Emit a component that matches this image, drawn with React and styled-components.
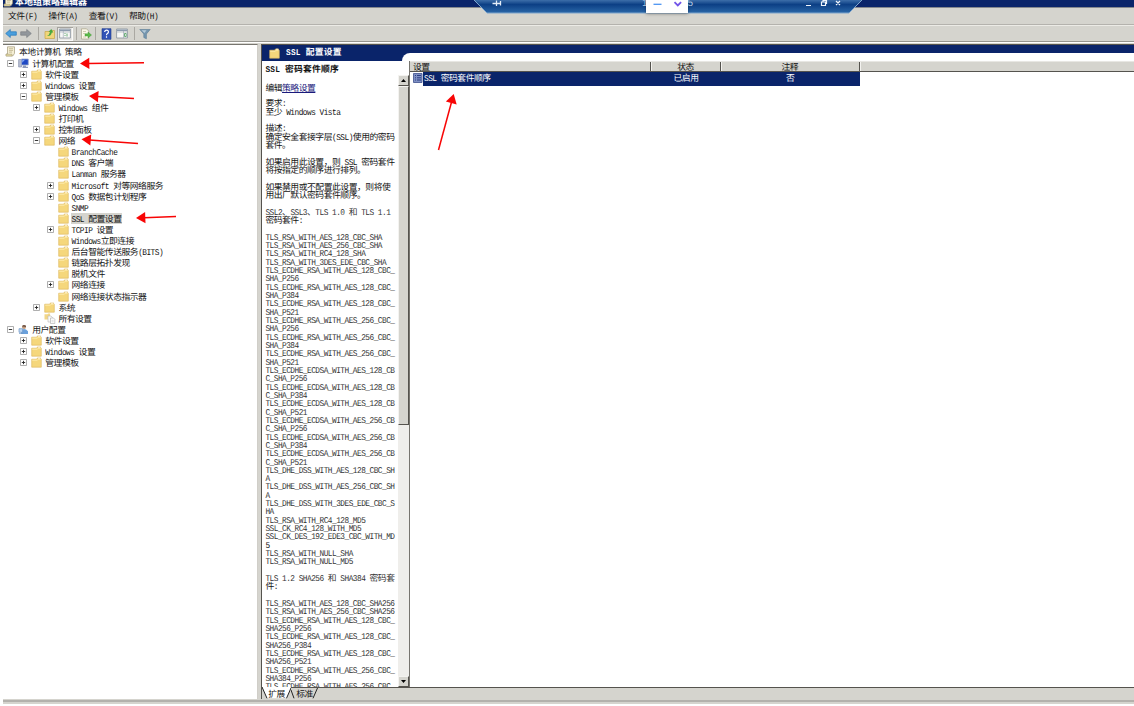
import React from "react";
import styled, { createGlobalStyle } from "styled-components";

const GlobalStyle = createGlobalStyle`
  * {
    box-sizing: border-box;
  }

  body {
    margin: 0;
    background: #fff;
    overflow: hidden;
  }
`;

const cjk = `"Noto Sans CJK SC", sans-serif`;
const mono = `"Liberation Mono", "Noto Sans CJK SC", monospace`;

const Latin = styled.span`
  display: inline-block;
  font-family: ${mono};
  font-size: 7.8px;
  letter-spacing: -0.515px;
  transform: scaleY(1.14);
`;

const Window = styled.div`
  position: relative;
  width: 1134px;
  height: 706px;
  padding-left: 3px;
  display: flex;
  flex-direction: column;
  overflow: hidden;
  font-family: ${cjk};
  font-size: 8.8px;
  letter-spacing: -0.47px;
  line-height: 11.1px;
  color: #111;
  white-space: pre;
  text-rendering: geometricPrecision;
`;

const TitleBar = styled.header`
  flex: none;
  height: 8px;
  display: flex;
  align-items: flex-end;
  gap: 1px;
  overflow: hidden;
  background: #0a246a;
  border-bottom: 1px solid #85888e;
  color: #fff;
  font-size: 9px;
  font-weight: 700;
  letter-spacing: 0;
  line-height: 11px;
`;

const MenuBar = styled.nav`
  flex: none;
  height: 17px;
  display: flex;
  align-items: center;
  gap: 11.2px;
  padding: 2px 0 0 5px;
  background: #d5d4ce;
  border-bottom: 1px solid #b4b2ad;
`;

const Toolbar = styled.div`
  flex: none;
  height: 17px;
  display: flex;
  align-items: center;
  padding-left: 2px;
  background: #d5d4ce;
  border-top: 1px solid #ecebe6;
  border-bottom: 1px solid #96958f;
`;

const ToolButton = styled.span`
  width: ${(props) => props.$w}px;
  height: 14px;
  display: flex;
  align-items: center;
  justify-content: center;
  background: ${(props) => (props.$pressed ? "#e9e8e4" : "none")};
  box-shadow: ${(props) => (props.$pressed ? "inset 1px 1px #a5a39e, inset -1px -1px #fafafa" : "none")};
`;

const Divider = styled.i`
  width: 1px;
  height: 13px;
  margin: 0 3px;
  background: #aaa8a2;
`;

const Body = styled.div`
  flex: 1;
  min-height: 0;
  display: flex;
  background: #d5d4ce;
  border-top: 1px solid #fff;
`;

const TreePane = styled.aside`
  flex: none;
  width: 255px;
  margin-top: 1px;
  padding-top: 1.4px;
  background: #fff;
  border-top: 1px solid #77756f;
  border-right: 1px solid #d0cec8;
`;

const TreeRow = styled.div`
  height: 11.107px;
  display: flex;
  align-items: center;
  padding-left: ${(props) => props.$indent}px;
`;

const ExpanderSlot = styled.span`
  width: 11px;
  display: flex;
  flex: none;
`;

const IconSlot = styled.span`
  width: 13px;
  display: flex;
  flex: none;
`;

const TreeLabel = styled.span`
  height: 11px;
  padding: 0 1px;
  background: ${(props) => (props.$selected ? "#d5d4ce" : "none")};
`;

const ResultPane = styled.main`
  flex: 1;
  min-width: 0;
  margin: 1px 0 0 3px;
  display: flex;
  flex-direction: column;
  border-left: 1px solid #55534e;
  border-top: 1px solid #55534e;
`;

const ResultHeader = styled.div`
  flex: none;
  height: 16px;
  display: flex;
  background: #0a246a;
`;

const HeaderCaption = styled.h1`
  width: 140px;
  height: 16px;
  margin: 0;
  padding: 1px 0 0 7px;
  display: flex;
  align-items: center;
  gap: 6px;
  color: #fff;
  font-size: 8.8px;
  font-weight: 700;
  letter-spacing: 0.2px;

  ${Latin} {
    letter-spacing: 0.25px;
  }
`;

const HeaderCurve = styled.div`
  flex: 1;
  margin-top: 8px;
  background: #fff;
  border-top-left-radius: 8px;
`;

const Columns = styled.div`
  flex: 1;
  min-height: 0;
  display: flex;
  background: #fff;
`;

const Description = styled.section`
  flex: none;
  width: 136px;
  padding: 2px 0 0 3.4px;
  overflow: hidden;
`;

const DescTitle = styled.h2`
  margin: 0;
  height: 11px;
  font-size: 8.8px;
  font-weight: 700;
  letter-spacing: 0.2px;

  ${Latin} {
    letter-spacing: 0.25px;
  }
`;

const EditLine = styled.p`
  margin: 7.5px 0 6.9px;
  height: 11px;
`;

const Link = styled.a`
  color: #1a1a7c;
  text-decoration: underline;
  text-underline-offset: 1px;
`;

const DescLine = styled.div`
  height: 8.33px;
  line-height: 8.33px;
  color: ${(props) => (props.$soft ? "#333" : "#111")};
`;

const ScrollBar = styled.div`
  flex: none;
  width: 11px;
  margin-top: 14px;
  display: flex;
  flex-direction: column;
  background: #efeeeb;
`;

const ScrollButton = styled.span`
  flex: none;
  height: 11px;
  display: flex;
  align-items: center;
  justify-content: center;
  background: #d5d4ce;
  border: 1px solid #f4f3f0;
  border-right-color: #55534e;
  border-bottom-color: #55534e;
`;

const ScrollThumb = styled.span`
  height: 339px;
  background: #d5d4ce;
  border: 1px solid #f4f3f0;
  border-right-color: #55534e;
  border-bottom-color: #55534e;
`;

const ScrollTrack = styled.span`
  flex: 1;
`;

const List = styled.section`
  flex: 1;
  min-width: 0;
  border-left: 1px solid #77756f;
`;

const ListGrid = styled.div`
  display: grid;
  grid-template-columns: 241px 70px 138.5px 1fr;
`;

const HeadRow = styled(ListGrid)`
  height: 11px;
  background: #d5d4ce;
  border-bottom: 1.5px solid #55534e;
  border-top: 1px solid #e8e7e3;
`;

const HeadCell = styled.span`
  height: 9px;
  line-height: 10px;
  padding-left: ${(props) => (props.$left ? "3px" : 0)};
  text-align: ${(props) => (props.$left ? "left" : "center")};
  border-right: ${(props) => (props.$last ? "none" : "1px solid #55534e")};
  box-shadow: ${(props) => (props.$left ? "none" : "inset 1px 0 #f4f3f0")};
`;

const SettingRow = styled(ListGrid)`
  height: 12px;
  color: #fff;
`;

const SettingCell = styled.span`
  line-height: 11px;
  text-align: ${(props) => (props.$name ? "left" : "center")};
  background: ${(props) => (props.$empty ? "none" : "#0a246a")};
  display: ${(props) => (props.$name ? "flex" : "block")};
`;

const SettingIcon = styled.span`
  width: 13px;
  margin-right: 1px;
  padding: 1px 0 0 3px;
  display: flex;
  background: #fff;
`;

const ViewTabs = styled.footer`
  flex: none;
  height: 12px;
  display: flex;
  background: #d5d4ce;
  border-top: 1px solid #55534e;
`;

const ViewTab = styled.span`
  position: relative;
  width: ${(props) => props.$w}px;
  height: 12px;
  margin-top: -1px;
  display: flex;
  align-items: center;
  justify-content: center;

  svg {
    position: absolute;
    inset: 0;
  }

  span {
    position: relative;
    padding-top: 2px;
  }
`;

const StatusBar = styled.div`
  flex: none;
  height: 5px;
  margin-bottom: 2px;
  background: #d5d4ce;
  border-top: 1px solid #d5d4ce;

  &::before {
    content: "";
    display: block;
    height: 2px;
    background: #b3b1ac;
  }
`;

const SessionBar = styled.div`
  position: absolute;
  left: 472px;
  top: 0;
  width: 390px;
  height: 14px;
`;

const SessionArt = styled.svg`
  position: absolute;
  inset: 0;
`;

const SessionText = styled.span`
  position: absolute;
  left: 170px;
  top: -3px;
  width: 51px;
  display: flex;
  justify-content: space-between;
  color: #b8cde6;
  font-family: "Liberation Sans", sans-serif;
  font-size: 10px;
  letter-spacing: 0;
  line-height: 13px;
`;

const FloatingBox = styled.div`
  position: absolute;
  left: 174px;
  top: 0;
  width: 42px;
  height: 13px;
  background: #fff;
  box-shadow: 0 1px 3px rgba(0, 0, 0, 0.35);
`;

const Annotations = styled.svg`
  position: absolute;
  left: 0;
  top: 0;
`;

// Half-width characters get the narrow console face, the rest stay in the CJK one
const Text = ({ children }) =>
  children
    .split(/([\x20-\x7e]+)/)
    .filter(Boolean)
    .map((part, i) => (/^[\x20-\x7e]/.test(part) ? <Latin key={i}>{part}</Latin> : part));

const FolderIcon = () => (
  <svg width="11" height="11" viewBox="0 0 11 11">
    <path d="M.7 2.2h5l.8-1.3h3v1.3h.8v8H.7z" fill="#f5d77c" stroke="#dcb65a" strokeWidth=".6" />
    <path d="M1.2 3.2h5.2l1-1h2.4" stroke="#fff0b8" strokeWidth=".8" fill="none" />
    <path d="M7 1.2h2.2" stroke="#fff" strokeWidth=".7" />
  </svg>
);

const PolicyIcon = () => (
  <svg width="11" height="11" viewBox="0 0 11 11">
    <path d="M2.5.8h7v6.5L8 9.8H1.2V8h1.3z" fill="#f5efd5" stroke="#a49b7b" strokeWidth=".7" />
    <path d="M4 2.7h4M4 4.4h4M4 6.1h3" stroke="#b4a982" strokeWidth=".7" />
    <path d="M1 8.2h6v1.9H1z" fill="#e2d69e" stroke="#a49b7b" strokeWidth=".5" />
  </svg>
);

const ComputerIcon = () => (
  <svg width="11" height="11" viewBox="0 0 11 11">
    <path d="M.6 1.500h3v7.500h-3z" fill="#b5bdd0" stroke="#7c88a7" strokeWidth=".6" />
    <path d="M3.500 1h6.800v6H3.500z" fill="#1f49c4" stroke="#9aa8cc" strokeWidth=".8" />
    <path d="M4.200 1.700h2.800l-2.800 3z" fill="#85a9f5" />
    <path d="M5 7.500h3v1.200h2v1.200H4.500v-1.200H5z" fill="#8e9ab8" />
  </svg>
);

const UserIcon = () => (
  <svg width="11" height="11" viewBox="0 0 11 11">
    <circle cx="6" cy="3" r="2.1" fill="#c09a7c" />
    <path d="M4 2.5Q5-.2 8 1.8L8 3Z" fill="#6c5144" />
    <path d="M3 10V7q1-2 3-2t4 2.2V10z" fill="#6ba1dc" />
    <path d="M1 4.7h3.6v3.6H1zM1 9.500h4.500" fill="#bed7f1" stroke="#6f97c5" strokeWidth=".7" />
  </svg>
);

const AllSettingsIcon = () => (
  <svg width="12" height="11" viewBox="0 0 12 11">
    <path d="M.5 1.3h3l.6-.8h2v6H.5z" fill="#f2d688" />
    <path d="M4 3h3l1.3 1.3V9H4z" fill="#fafafa" stroke="#bbb" strokeWidth=".6" />
    <path d="M6.5 5h3l1.3 1.3v4.2H6.5z" fill="#fff" stroke="#aaa" strokeWidth=".6" />
    <path d="M7.5 7.3h2.2M7.5 8.8h2.2" stroke="#bbb" strokeWidth=".5" />
  </svg>
);

const Expander = ({ open }) => (
  <svg width="7" height="7" viewBox="0 0 7 7">
    <path d="M.5.5h6v6h-6z" fill="#fff" stroke="#9b9b9b" strokeWidth=".8" />
    <path d={open ? "M1.8 3.5h3.4" : "M1.8 3.5h3.4M3.5 1.8v3.4"} stroke="#222" strokeWidth=".9" />
  </svg>
);

const ArrowIcon = ({ back }) => (
  <svg width="12" height="11" viewBox="0 0 12 11">
    <path
      d={back ? "M.7 5.5l4.6-4v2.3h6v3.4h-6v2.3z" : "M11.3 5.5l-4.6-4v2.3h-6v3.4h6v2.3z"}
      fill={back ? "#4a9fdd" : "#92979c"}
      stroke={back ? "#2476b8" : "#7c8084"}
      strokeWidth=".7"
    />
  </svg>
);

const UpFolderIcon = () => (
  <svg width="12" height="12" viewBox="0 0 12 12">
    <path d="M1 3.500h4l1-1h4.500v8H1z" fill="#f0d67a" stroke="#c9a548" strokeWidth=".7" />
    <path d="M3 8q2.200-.5 3-4L4.600 4 7.300 1l2 3.600L7.800 4.500Q7 8.500 3 8z" fill="#49a83e" />
  </svg>
);

const PanelIcon = ({ right }) => (
  <svg width="12" height="11" viewBox="0 0 12 11">
    <path d="M.6 1h10.800v9H.6z" fill="#f8f8f6" stroke="#85909d" strokeWidth=".8" />
    <path d="M1 2.300h10" stroke="#8d9cae" strokeWidth="1.6" />
    <path d={right ? "M7.500 3v7M1 4h10" : "M4.300 3v7M1 4h10"} stroke="#9aa5b1" strokeWidth=".6" />
    <path d={right ? "M8.500 5.500h1.700v3H8.500z" : "M5.500 5.500h1M5.500 7.500h1M8 5.500v3"} stroke="#5ca66b" fill="none" strokeWidth=".9" />
  </svg>
);

const ExportIcon = () => (
  <svg width="12" height="12" viewBox="0 0 12 12">
    <path d="M1.500.8h5L8.700 3v8h-7.200z" fill="#fbf8e8" stroke="#a8a288" strokeWidth=".7" />
    <path d="M3 3.500h3M3 5.500h2M3 9h3" stroke="#b8b08c" strokeWidth=".6" />
    <path d="M5 5.800h3V4l3.500 3L8 10V8H5z" fill="#5cba48" stroke="#3b9330" strokeWidth=".4" />
  </svg>
);

const HelpIcon = () => (
  <svg width="11" height="12" viewBox="0 0 11 12">
    <path d="M1 .7h9v10.600H1z" fill="#3153b7" stroke="#1e3a8c" strokeWidth=".6" />
    <path d="M3.700 4q0-1.800 1.900-1.800T7.400 4q0 1-1 1.600t-.9 1.600M5.500 8.300v1.400" stroke="#fff" strokeWidth="1.200" fill="none" />
  </svg>
);

const FilterIcon = () => (
  <svg width="12" height="12" viewBox="0 0 12 12">
    <path d="M.8 1.500h10.400L7.400 6v4.800L4.800 9.500V6z" fill="#7596af" stroke="#5b7c95" strokeWidth=".6" />
    <path d="M2.500 2.300h5L5.500 5z" fill="#b4cad9" />
  </svg>
);

const SettingGlyph = () => (
  <svg width="10" height="10" viewBox="0 0 10 10">
    <path d="M.5.5h8.500v9H.5z" fill="#7f90c4" stroke="#3e4f8d" strokeWidth=".8" />
    <path d="M2 2.500h1M2 4.800h1M2 7h1M4 2.500h4M4 4.800h4M4 7h4" stroke="#24367c" strokeWidth=".9" />
  </svg>
);

const icons = {
  folder: FolderIcon,
  policy: PolicyIcon,
  computer: ComputerIcon,
  user: UserIcon,
  all: AllSettingsIcon,
};

// depth, label, expander ("+", "-" or none), icon
const tree = [
  [0, "计算机配置", "-", "computer"],
  [1, "软件设置", "+"],
  [1, "Windows 设置", "+"],
  [1, "管理模板", "-"],
  [2, "Windows 组件", "+"],
  [2, "打印机"],
  [2, "控制面板", "+"],
  [2, "网络", "-"],
  [3, "BranchCache"],
  [3, "DNS 客户端"],
  [3, "Lanman 服务器"],
  [3, "Microsoft 对等网络服务", "+"],
  [3, "QoS 数据包计划程序", "+"],
  [3, "SNMP"],
  [3, "SSL 配置设置"],
  [3, "TCPIP 设置", "+"],
  [3, "Windows立即连接"],
  [3, "后台智能传送服务(BITS)"],
  [3, "链路层拓扑发现"],
  [3, "脱机文件"],
  [3, "网络连接", "+"],
  [3, "网络连接状态指示器"],
  [2, "系统", "+"],
  [2, "所有设置", "", "all"],
  [0, "用户配置", "-", "user"],
  [1, "软件设置", "+"],
  [1, "Windows 设置", "+"],
  [1, "管理模板", "+"],
];

const description = `要求:
至少 Windows Vista

描述:
确定安全套接字层(SSL)使用的密码
套件。

如果启用此设置，则 SSL 密码套件
将按指定的顺序进行排列。

如果禁用或不配置此设置，则将使
用出厂默认密码套件顺序。

SSL2、SSL3、TLS 1.0 和 TLS 1.1
密码套件:

TLS_RSA_WITH_AES_128_CBC_SHA
TLS_RSA_WITH_AES_256_CBC_SHA
TLS_RSA_WITH_RC4_128_SHA
TLS_RSA_WITH_3DES_EDE_CBC_SHA
TLS_ECDHE_RSA_WITH_AES_128_CBC_
SHA_P256
TLS_ECDHE_RSA_WITH_AES_128_CBC_
SHA_P384
TLS_ECDHE_RSA_WITH_AES_128_CBC_
SHA_P521
TLS_ECDHE_RSA_WITH_AES_256_CBC_
SHA_P256
TLS_ECDHE_RSA_WITH_AES_256_CBC_
SHA_P384
TLS_ECDHE_RSA_WITH_AES_256_CBC_
SHA_P521
TLS_ECDHE_ECDSA_WITH_AES_128_CB
C_SHA_P256
TLS_ECDHE_ECDSA_WITH_AES_128_CB
C_SHA_P384
TLS_ECDHE_ECDSA_WITH_AES_128_CB
C_SHA_P521
TLS_ECDHE_ECDSA_WITH_AES_256_CB
C_SHA_P256
TLS_ECDHE_ECDSA_WITH_AES_256_CB
C_SHA_P384
TLS_ECDHE_ECDSA_WITH_AES_256_CB
C_SHA_P521
TLS_DHE_DSS_WITH_AES_128_CBC_SH
A
TLS_DHE_DSS_WITH_AES_256_CBC_SH
A
TLS_DHE_DSS_WITH_3DES_EDE_CBC_S
HA
TLS_RSA_WITH_RC4_128_MD5
SSL_CK_RC4_128_WITH_MD5
SSL_CK_DES_192_EDE3_CBC_WITH_MD
5
TLS_RSA_WITH_NULL_SHA
TLS_RSA_WITH_NULL_MD5

TLS 1.2 SHA256 和 SHA384 密码套
件:

TLS_RSA_WITH_AES_128_CBC_SHA256
TLS_RSA_WITH_AES_256_CBC_SHA256
TLS_ECDHE_RSA_WITH_AES_128_CBC_
SHA256_P256
TLS_ECDHE_RSA_WITH_AES_128_CBC_
SHA256_P384
TLS_ECDHE_RSA_WITH_AES_128_CBC_
SHA256_P521
TLS_ECDHE_RSA_WITH_AES_256_CBC_
SHA384_P256
TLS_ECDHE_RSA_WITH_AES_256_CBC_`.split("\n");

const arrows = [
  { tip: [80, 63.5], tail: [144, 62.8] },
  { tip: [89, 96], tail: [134, 98.6] },
  { tip: [81.5, 139.3], tail: [138, 143.6] },
  { tip: [136, 218], tail: [176, 216.6] },
  { tip: [453.7, 94], tail: [438.5, 150] },
];

const RedArrow = ({ tip, tail }) => {
  const angle = (Math.atan2(tail[1] - tip[1], tail[0] - tip[0]) * 180) / Math.PI;
  const length = Math.hypot(tail[0] - tip[0], tail[1] - tip[1]);
  return (
    <g transform={`translate(${tip[0]} ${tip[1]}) rotate(${angle})`}>
      <path d="M0 0L9.3-5.6V5.6z" fill="#f80505" />
      <path d={`M8 0H${length}`} stroke="#f80505" strokeWidth="1.5" />
    </g>
  );
};

const TreeItem = ({ item }) => {
  const [depth, label, toggle, icon = "folder"] = item;
  const Icon = icons[icon];
  return (
    <TreeRow $indent={4.2 + depth * 13.1}>
      <ExpanderSlot>{toggle && <Expander open={toggle === "-"} />}</ExpanderSlot>
      <IconSlot>
        <Icon />
      </IconSlot>
      <TreeLabel $selected={label === "SSL 配置设置"}>
        <Text>{label}</Text>
      </TreeLabel>
    </TreeRow>
  );
};

const App = () => {
  return (
    <Window>
      <GlobalStyle />
      <TitleBar>
        <PolicyIcon />
        <span>本地组策略编辑器</span>
      </TitleBar>
      <MenuBar>
        {["文件(F)", "操作(A)", "查看(V)", "帮助(H)"].map((menu) => (
          <span key={menu}>
            <Text>{menu}</Text>
          </span>
        ))}
      </MenuBar>
      <Toolbar>
        <ToolButton $w={12}><ArrowIcon back /></ToolButton>
        <ToolButton $w={18}><ArrowIcon /></ToolButton>
        <Divider />
        <ToolButton $w={15}><UpFolderIcon /></ToolButton>
        <ToolButton $w={16} $pressed><PanelIcon /></ToolButton>
        <Divider />
        <ToolButton $w={12}><ExportIcon /></ToolButton>
        <Divider />
        <ToolButton $w={14}><HelpIcon /></ToolButton>
        <ToolButton $w={18}><PanelIcon right /></ToolButton>
        <Divider />
        <ToolButton $w={13}><FilterIcon /></ToolButton>
      </Toolbar>
      <Body>
        <TreePane>
          <TreeRow $indent={2}>
            <IconSlot>
              <PolicyIcon />
            </IconSlot>
            <TreeLabel>
              <Text>本地计算机 策略</Text>
            </TreeLabel>
          </TreeRow>
          {tree.map((item, index) => (
            <TreeItem key={index} item={item} />
          ))}
        </TreePane>
        <ResultPane>
          <ResultHeader>
            <HeaderCaption>
              <FolderIcon />
              <span>
                <Text>SSL 配置设置</Text>
              </span>
            </HeaderCaption>
            <HeaderCurve />
          </ResultHeader>
          <Columns>
            <Description>
              <DescTitle>
                <Text>SSL 密码套件顺序</Text>
              </DescTitle>
              <EditLine>
                编辑<Link>策略设置</Link>
              </EditLine>
              {description.map((line, index) => (
                <DescLine key={index} $soft={/^[A-Z]/.test(line)}>
                  <Text>{line}</Text>
                </DescLine>
              ))}
            </Description>
            <ScrollBar>
              <ScrollButton>
                <svg width="5" height="3" viewBox="0 0 5 3"><path d="M0 3h5L2.5 0z" /></svg>
              </ScrollButton>
              <ScrollThumb />
              <ScrollTrack />
              <ScrollButton>
                <svg width="5" height="3" viewBox="0 0 5 3"><path d="M0 0h5L2.5 3z" /></svg>
              </ScrollButton>
            </ScrollBar>
            <List>
              <HeadRow>
                <HeadCell $left>设置</HeadCell>
                <HeadCell>状态</HeadCell>
                <HeadCell>注释</HeadCell>
                <HeadCell $last />
              </HeadRow>
              <SettingRow>
                <SettingCell $name>
                  <SettingIcon>
                    <SettingGlyph />
                  </SettingIcon>
                  <span>
                    <Text>SSL 密码套件顺序</Text>
                  </span>
                </SettingCell>
                <SettingCell>已启用</SettingCell>
                <SettingCell>否</SettingCell>
                <SettingCell $empty />
              </SettingRow>
            </List>
          </Columns>
          <ViewTabs>
            <ViewTab $w={29}>
              <svg width="29" height="12" viewBox="0 0 29 12">
                <path d="M0 0L5 11.3H25L29 0z" fill="#fff" />
                <path d="M0 0L5 11.3M24.5 11.3L29 1" stroke="#222" fill="none" />
              </svg>
              <span>扩展</span>
            </ViewTab>
            <ViewTab $w={27}>
              <svg width="27" height="12" viewBox="0 0 27 12">
                <path d="M0 3L3 11.3M22 11.3L26.5 1" stroke="#222" fill="none" />
              </svg>
              <span>标准</span>
            </ViewTab>
          </ViewTabs>
        </ResultPane>
      </Body>
      <StatusBar />
      <SessionBar>
        <SessionArt width="390" height="14" viewBox="0 0 390 14">
          <defs>
            <linearGradient id="session" x1="0" y1="0" x2="0" y2="1">
              <stop offset="0" stopColor="#3d6ea9" />
              <stop offset=".35" stopColor="#0c3f85" />
              <stop offset="1" stopColor="#2b68a8" />
            </linearGradient>
          </defs>
          <path d="M2 0L15 13H377L390 0z" fill="url(#session)" />
          <path d="M2 0L15 13H377L390 0" fill="none" stroke="#7da4cc" />
          <path d="M20.500 3.500H24M24.500.5v5.500M25 3.500h3M28.500 1v4.500" stroke="#e5eef9" strokeWidth="1.300" />
          <path d="M334 5.500h5M349.500 2h4v3.500h-4zM351 2V.5h3.500V4M364 1l4 4M368 1l-4 4" stroke="#f1f6fc" fill="none" strokeWidth="1.200" />
        </SessionArt>
        <SessionText>
          <span>1</span>
          <span>5</span>
        </SessionText>
        <FloatingBox>
          <svg width="42" height="13" viewBox="0 0 42 13">
            <path d="M7.500 4.300h8" stroke="#4b94f3" strokeWidth="1.300" />
            <path d="M28.500 2.200l3.300 3.300 3.300-3.300" stroke="#7255e8" strokeWidth="1.800" fill="none" />
          </svg>
        </FloatingBox>
      </SessionBar>
      <Annotations width="480" height="240" viewBox="0 0 480 240">
        {arrows.map((arrow, index) => (
          <RedArrow key={index} {...arrow} />
        ))}
      </Annotations>
    </Window>
  );
};

export default App;
